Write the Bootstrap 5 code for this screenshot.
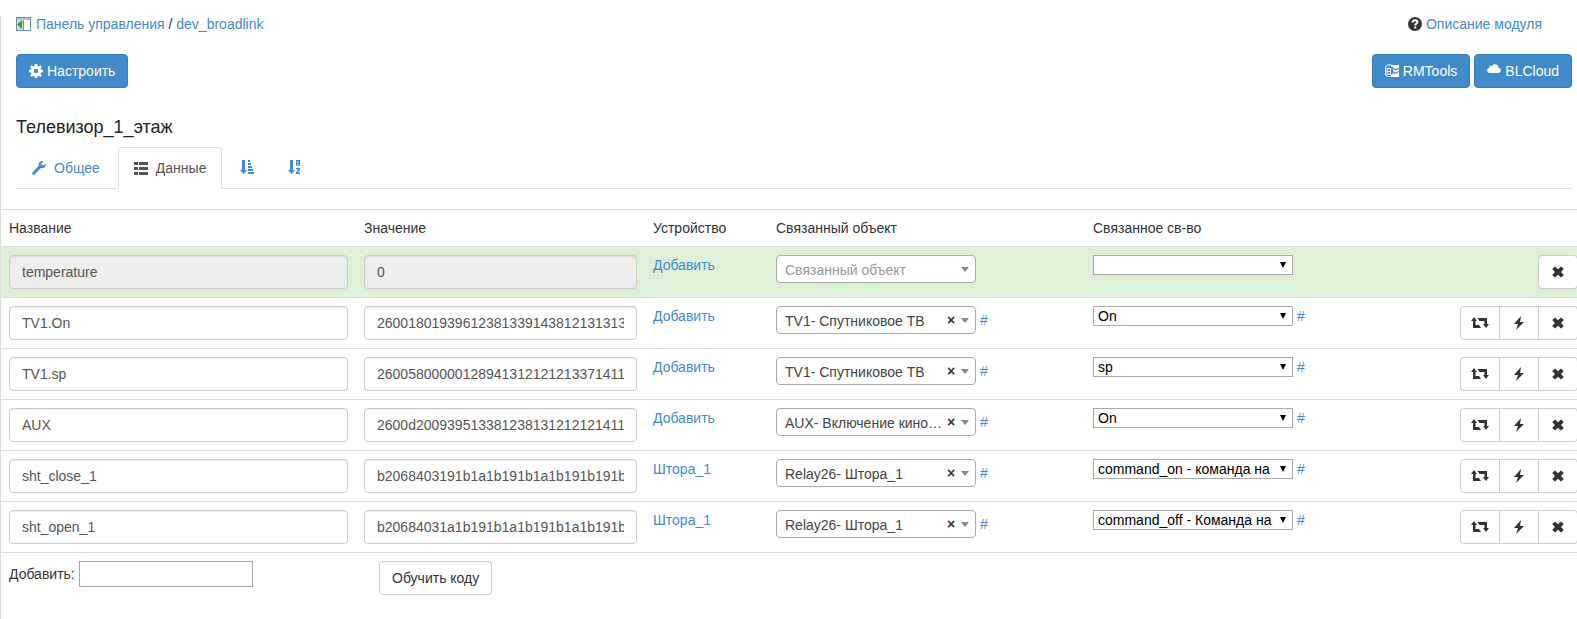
<!DOCTYPE html>
<html lang="ru">
<head>
<meta charset="utf-8">
<meta name="viewport" content="width=device-width, initial-scale=1">
<title>dev_broadlink</title>
<link href="https://cdn.jsdelivr.net/npm/bootstrap@5.3.0/dist/css/bootstrap.min.css" rel="stylesheet">
<style>
body{font:14px/20px "Liberation Sans",Arial,sans-serif;color:#333;background:#fff}
a{color:#428bca;text-decoration:none}
svg{fill:currentColor;flex:none}
.panel-body-left{border-left:1px solid #ddd;margin-top:16px;min-height:calc(100vh - 16px);overflow:hidden}
.head-area{padding:0 5px 0 15px}
.crumbs{padding-right:30px;margin-bottom:22px;line-height:16px}
.btn{font-size:14px;line-height:20px;padding:6px 12px;border-radius:4px}
.btn-primary{--bs-btn-bg:#428bca;--bs-btn-border-color:#357ebd;--bs-btn-hover-bg:#3071a9}
.btn-plain{--bs-btn-color:#333;--bs-btn-bg:#fff;--bs-btn-border-color:#ccc;--bs-btn-hover-bg:#e6e6e6;--bs-btn-hover-border-color:#adadad}
.page-title{font-size:18px;line-height:20px;color:#222;margin:29px 0 10px;font-weight:400}
.nav-tabs{--bs-nav-tabs-border-color:#ddd;--bs-nav-tabs-link-active-border-color:#ddd #ddd #fff;--bs-nav-tabs-link-active-color:#555;--bs-nav-link-color:#428bca;gap:2px;margin-bottom:20px}
.nav-tabs .nav-link{padding:10px 15px;border-radius:4px 4px 0 0}
.data{table-layout:fixed;--bs-table-bg:transparent;--bs-table-color:#333;margin:0;border-color:#ddd}
.data>:not(caption)>*>*{border-width:1px 0 0;padding:8px}
.data th{font-weight:400}
.data .row-ok>*{background:#dff0d8}
.data>:not(caption)>*>.acts{padding-right:0;text-align:right}
.acts .btn-group{margin-right:-1px}
.act{width:40px;height:34px;padding:0}
.learn{margin-left:15px}
.data .form-control{height:34px;font-size:14px;line-height:20px;padding:6px 12px;color:#555;border:1px solid #ccc;border-radius:4px;box-shadow:inset 0 1px 1px rgba(0,0,0,.075)}
.data .form-control:disabled{background:#eee}
.c-name{width:355px}.c-val{width:289px}.c-dev{width:123px}.c-link{width:317px}
.pick{width:200px;height:28px;appearance:none;border:1px solid #aaa;border-radius:4px;padding:1px 34px 0 8px;color:#444;display:block;background:#fff url("data:image/svg+xml,%3Csvg xmlns='http://www.w3.org/2000/svg' width='8' height='5'%3E%3Cpath d='M0 0h8l-4 5z' fill='%23888'/%3E%3C/svg%3E") no-repeat right 6px center}
.pick-empty{color:#999}
.wipe{position:absolute;right:17px;top:4px;border:0;background:none;padding:0;width:16px;height:20px;font-weight:700;line-height:20px;color:#333}
.prop{width:200px;height:20px;appearance:none;border:1px solid #a9a9a9;border-radius:0;padding:0 18px 0 4px;color:#000;line-height:18px;background:#fff url("data:image/svg+xml,%3Csvg xmlns='http://www.w3.org/2000/svg' width='6' height='6'%3E%3Cpath d='M0 0h6l-3 6z'/%3E%3C/svg%3E") no-repeat right 6px center}
.hash{margin-left:4px}
.new-name{width:174px;height:26px;border:1px solid #a9a9a9;padding:1px 4px;margin-left:4px}
</style>
</head>
<body>
<svg class="d-none" aria-hidden="true">
  <symbol id="i-cog" viewBox="0 0 14 14"><path fill-rule="evenodd" d="M5.700 0h2.600l.3 2 1.100.5 1.700-1.300 1.500 1.500-1.200 1.700.4 1.200 1.900.3v2.300l-1.900.3-.5 1.200 1.300 1.700-1.500 1.500-1.700-1.200-1.100.4L8.300 14H5.700l-.3-1.900-1.100-.4-1.700 1.200-1.500-1.500 1.200-1.700-.4-1.200L0 8.200V5.900l1.900-.3.5-1.200-1.300-1.700 1.500-1.500 1.700 1.300L5.400 2zM7 4.700a2.300 2.300 0 1 0 0 4.600 2.300 2.300 0 0 0 0-4.600z"/></symbol>
  <symbol id="i-wrench" viewBox="0 0 14 14"><path d="M13.700 2.700 11.500 4.600 9.600 4 9.300 2.200 11.500.2C9.800-.3 7.800.3 7 1.900c-.5 1-.4 2-.1 2.800L.5 11.300c-.5.500-.4 1.200 0 1.700l.4.500c.5.500 1.200.5 1.700 0L8.900 6.900c1.200.5 2.700.3 3.800-.7 1-.9 1.400-2.300 1-3.500z"/></symbol>
  <symbol id="i-list" viewBox="0 0 14 13"><path d="M0 0h4v3H0zm5 0h9v3H5zM0 5h4v3H0zm5 0h9v3H5zM0 10h4v3H0zm5 0h9v3H5z"/></symbol>
  <symbol id="i-sort" viewBox="0 0 14 14"><path d="M2 0h3v10h2l-3.500 4L0 10h2zM8 0h2v2H8zm0 3h3v2H8zm0 3h4v2H8zm0 3h5v2H8zm0 3h6v2H8z"/></symbol>
  <symbol id="i-az" viewBox="0 0 14 14"><path fill-rule="evenodd" d="M2 0h3v10h2l-3.500 4L0 10h2zM8 0h4v6h-1.500V4h-1v2H8zm1.500 1v2h1V1zM8 8h4v2l-2.500 2.500H12V14H8v-2l2.500-2.500H8z"/></symbol>
  <symbol id="i-swap" viewBox="0 0 18 12"><path d="M3 0l3 4H4.500v4H8l2 3H2V4H0zM6.500 1H16v6h2l-3 4-3-4h1.500V4h-5z"/></symbol>
  <symbol id="i-flash" viewBox="0 0 12 14"><path d="M8 0 1 8h4l-2 6 8-8H7z"/></symbol>
  <symbol id="i-x" viewBox="0 0 12 12"><path d="M3 .5 6 3.200 9 .5 11.800 3 9 6l2.800 3L9 11.500 6 8.800 3 11.500.2 9 3 6 .2 3z"/></symbol>
</svg>
<main class="panel-body-left">
  <div class="head-area">
    <div class="crumbs d-flex justify-content-between">
      <div class="d-flex align-items-center gap-1">
        <svg width="16" height="14" viewBox="0 0 16 14" aria-hidden="true"><path fill="#6d8fb5" d="M0 0h15v14H0z"/><path fill="#a9c6e8" d="M1 1h13v2H1z"/><path fill="#cfe3cb" d="M1 3h6v10H1z"/><path fill="#fff" d="M8 3h6v10H8z"/><path fill="#3d9a3a" d="M1 7.500 6 3v9z"/></svg>
        <span><a href="#">Панель управления</a> / <a href="#">dev_broadlink</a></span>
      </div>
      <div class="d-flex align-items-center gap-1">
        <svg width="14" height="14" viewBox="0 0 14 14" aria-hidden="true"><circle cx="7" cy="7" r="7"/><path fill="none" stroke="#fff" stroke-width="2" d="M4.500 5.500C4.500 2.500 9.500 2.500 9.500 5c0 1.500-2.300 1.500-2.300 3.400M7.200 9.500v2"/></svg>
        <a href="#">Описание модуля</a>
      </div>
    </div>
    <div class="d-flex justify-content-between">
      <button class="btn btn-primary d-flex align-items-center gap-1" type="button"><svg width="14" height="14"><use href="#i-cog"/></svg>Настроить</button>
      <div class="d-flex gap-1">
        <button class="btn btn-primary d-flex align-items-center gap-1" type="button"><svg width="14" height="14" viewBox="0 0 14 14"><path fill="none" stroke="currentColor" d="M.5 3 2.500 1H6.500M.5 3v8L2.500 12.500h4M2 4.500h3.500v6H2zM2 7.500h3.500M6.500 1v2M6.500 12.500v-2"/><path d="M7 1h7v3l-4 1-3-2zm1 4 2 1.500 4-1.500v2l-4 1.500L8 7zm0 4 2 1 4-2v5H7v-2z"/></svg>RMTools</button>
        <button class="btn btn-primary d-flex align-items-center gap-1" type="button"><svg width="14" height="14" viewBox="0 0 14 14"><path d="M2.500 9A2.600 2.600 0 0 1 2 3.900 2 2 0 0 1 4.500 2 3.800 3.800 0 0 1 11.500 3.500 2.800 2.800 0 0 1 11.500 9z"/></svg>BLCloud</button>
      </div>
    </div>
    <h1 class="page-title">Телевизор_1_этаж</h1>
    <ul class="nav nav-tabs">
      <li class="nav-item"><a class="nav-link d-flex align-items-center gap-2" href="#"><svg width="14" height="14"><use href="#i-wrench"/></svg>Общее</a></li>
      <li class="nav-item"><a class="nav-link active d-flex align-items-center gap-2" aria-current="page" href="#"><svg width="14" height="13"><use href="#i-list"/></svg>Данные</a></li>
      <li class="nav-item"><a class="nav-link d-flex align-items-center" href="#" aria-label="Сортировка"><svg width="14" height="20" viewBox="0 0 14 20"><use href="#i-sort" y="2" width="14" height="14"/></svg></a></li>
      <li class="nav-item"><a class="nav-link d-flex align-items-center" href="#" aria-label="По алфавиту"><svg width="14" height="20" viewBox="0 0 14 20"><use href="#i-az" y="2" width="14" height="14"/></svg></a></li>
    </ul>
  </div>
  <table class="table data">
    <colgroup><col class="c-name"><col class="c-val"><col class="c-dev"><col class="c-link"><col class="c-link"><col></colgroup>
    <thead><tr><th>Название</th><th>Значение</th><th>Устройство</th><th>Связанный объект</th><th>Связанное св-во</th><th></th></tr></thead>
    <tbody id="rows"></tbody>
    <tfoot class="align-top"><tr>
      <td><label class="d-flex align-items-center">Добавить: <input class="new-name" type="text"></label></td>
      <td colspan="5"><button class="btn btn-plain learn" type="button">Обучить коду</button></td>
    </tr></tfoot>
  </table>
</main>
<script src="https://cdn.jsdelivr.net/npm/bootstrap@5.3.0/dist/js/bootstrap.bundle.min.js"></script>
<script>
const items = [
  ["temperature", "0", "Добавить", "", ""],
  ["TV1.On", "26001801939612381339143812131313", "Добавить", "TV1- Спутниковое ТВ", "On"],
  ["TV1.sp", "26005800000128941312121213371411", "Добавить", "TV1- Спутниковое ТВ", "sp"],
  ["AUX", "2600d200939513381238131212121411", "Добавить", "AUX- Включение кино…", "On"],
  ["sht_close_1", "b2068403191b1a1b191b1a1b191b191b", "Штора_1", "Relay26- Штора_1", "command_on - команда на"],
  ["sht_open_1", "b20684031a1b191b1a1b191b1a1b191b", "Штора_1", "Relay26- Штора_1", "command_off - Команда на"]
];
const btn = (id, w, h, label) => `<button class="btn btn-plain d-flex justify-content-center align-items-center act" type="button" aria-label="${label}"><svg width="${w}" height="${h}"><use href="#${id}"/></svg></button>`;
const hash = '<a class="hash" href="#">#</a>';
document.getElementById("rows").innerHTML = items.map(([name, val, dev, obj, prop]) => {
  const off = obj ? "" : "disabled";
  return `<tr class="${obj ? "" : "row-ok"}">
    <td><input class="form-control" type="text" aria-label="Название" value="${name}" ${off}></td>
    <td><input class="form-control" type="text" aria-label="Значение" value="${val}" ${off}></td>
    <td><a href="#">${dev}</a></td>
    <td><div class="d-flex align-items-center"><div class="position-relative"><select class="pick ${obj ? "" : "pick-empty"}" aria-label="Связанный объект"><option>${obj || "Связанный объект"}</option></select>${obj ? '<button class="wipe" type="button" aria-label="Очистить">×</button>' : ""}</div>${obj ? hash : ""}</div></td>
    <td><div class="d-flex align-items-center"><select class="prop" aria-label="Связанное св-во"><option>${prop}</option></select>${prop ? hash : ""}</div></td>
    <td class="acts"><div class="btn-group">${obj ? btn("i-swap", 18, 12, "Заменить") + btn("i-flash", 12, 14, "Выполнить") : ""}${btn("i-x", 12, 12, "Удалить")}</div></td>
  </tr>`;
}).join("");
</script>
</body>
</html>
